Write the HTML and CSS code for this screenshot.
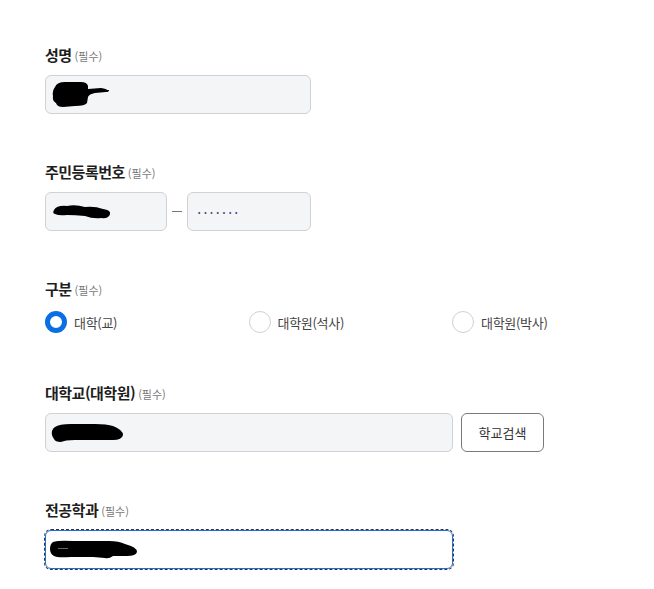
FILE: index.html
```html
<!DOCTYPE html>
<html lang="ko">
<head>
<meta charset="utf-8">
<link rel="stylesheet" href="styles.css">
</head>
<body>
<form class="form">
  <div class="field">
    <div class="label">성명<span class="req">(필수)</span></div>
    <div class="box w266">
      <svg class="blot" width="60" height="28" viewBox="0 0 60 28"><path d="M4 6 Q6 1 14 1 L30 1 Q36 1 37 5 L37 8 L50 7 Q56 8 56 9 L58 9 Q58 11 55 11 L44 12 Q38 13 37 16 L36 22 Q34 25 24 25 L12 26 Q6 26 5 22 Q1 20 2 15 Q1 10 4 6 Z" fill="#000"/></svg>
    </div>
  </div>

  <div class="field">
    <div class="label">주민등록번호<span class="req">(필수)</span></div>
    <div class="row">
      <div class="box w122">
        <svg class="blot" width="62" height="18" viewBox="0 0 62 18"><path d="M3 7 Q6 2 16 3 Q24 1 34 4 Q44 3 52 6 Q60 7 59 11 Q58 16 50 15 Q42 16 34 13 Q24 12 16 12 Q8 13 4 11 Q1 10 3 7 Z" fill="#000"/></svg>
      </div>
      <div class="dash"></div>
      <div class="box w124 dots">•••••••</div>
    </div>
  </div>

  <div class="field">
    <div class="label">구분<span class="req">(필수)</span></div>
    <div class="radios">
      <label class="radio"><span class="circle on"></span>대학(교)</label>
      <label class="radio"><span class="circle"></span>대학원(석사)</label>
      <label class="radio"><span class="circle"></span>대학원(박사)</label>
    </div>
  </div>

  <div class="field">
    <div class="label">대학교(대학원)<span class="req">(필수)</span></div>
    <div class="row gap8">
      <div class="box w408">
        <svg class="blot" width="74" height="20" viewBox="0 0 74 20"><path d="M4 4 Q8 1 20 1 L44 1 Q56 1 62 3 Q72 7 72 12 Q71 17 62 17 L24 17 Q14 17 10 19 Q4 19 3 16 Q0 12 1 8 Q2 5 4 4 Z" fill="#000"/></svg>
      </div>
      <button type="button" class="btn">학교검색</button>
    </div>
  </div>

  <div class="field">
    <div class="label">전공학과<span class="req">(필수)</span></div>
    <div class="box w408 focus">
      <svg class="blot" width="90" height="22" viewBox="0 0 90 22"><path d="M4 3 Q10 1 24 2 L60 2 Q70 2 76 5 Q88 8 88 13 Q87 17 78 17 L64 17 Q60 20 56 19 L44 18 L22 18 Q8 19 5 17 Q1 15 1 10 Q1 5 4 3 Z" fill="#000"/><rect x="9" y="9" width="10" height="1" fill="#666"/></svg>
    </div>
  </div>
</form>
</body>
</html>
```

FILE: styles.css
```css
* { box-sizing: border-box; }
html, body { margin: 0; padding: 0; background: #fff; }
body {
  font-family: "Noto Sans CJK KR", "Noto Sans", sans-serif;
  color: #222;
  width: 654px;
  height: 589px;
  overflow: hidden;
}
.form {
  padding: 45px 0 0 45px;
  display: flex;
  flex-direction: column;
  gap: 48px;
}
.field { display: flex; flex-direction: column; }
.label {
  font-size: 15px;
  font-weight: 700;
  line-height: 20px;
  height: 20px;
  margin-bottom: 10px;
  letter-spacing: -0.5px;
  color: #1e1e1e;
}
.req {
  font-size: 11px;
  font-weight: 400;
  color: #777;
  margin-left: 3px;
  letter-spacing: 0;
}
.box {
  height: 39px;
  border: 1px solid #cfd1d4;
  border-radius: 6px;
  background: #f4f5f7;
  display: flex;
  align-items: center;
  padding-left: 5px;
}
.w266 { width: 266px; }
.w122 { width: 122px; }
.w124 { width: 124px; }
.w408 { width: 408px; }
.row { display: flex; align-items: center; }
.gap8 { gap: 8px; }
.dash {
  width: 10px;
  height: 1px;
  background: #777;
  margin: 0 5px;
}
.dots {
  padding-left: 10px;
  font-size: 7px;
  letter-spacing: 3.8px;
  color: #34456a;
}
.blot { display: block; }
.radios {
  display: grid;
  grid-template-columns: 203.5px 203.5px 203.5px;
  height: 26px;
  align-items: center;
}
.radio {
  display: flex;
  align-items: center;
  gap: 7px;
  font-size: 13px;
  color: #444;
  letter-spacing: -0.3px;
}
.circle {
  width: 22px;
  height: 22px;
  border-radius: 50%;
  border: 1px solid #cfd1d4;
  background: #fff;
}
.circle.on { border: 5px solid #0b6fe3; }
.btn {
  width: 83px;
  height: 39px;
  border: 1px solid #7a7a7a;
  border-radius: 6px;
  background: #fff;
  font-family: "Noto Sans CJK KR", sans-serif;
  font-size: 13px;
  color: #333;
  padding: 0;
}
.focus {
  background: #fff;
  border: 1px solid #1b6fd8;
  outline: 1px dashed #333;
  outline-offset: 0;
  padding-left: 3px;
}
```
